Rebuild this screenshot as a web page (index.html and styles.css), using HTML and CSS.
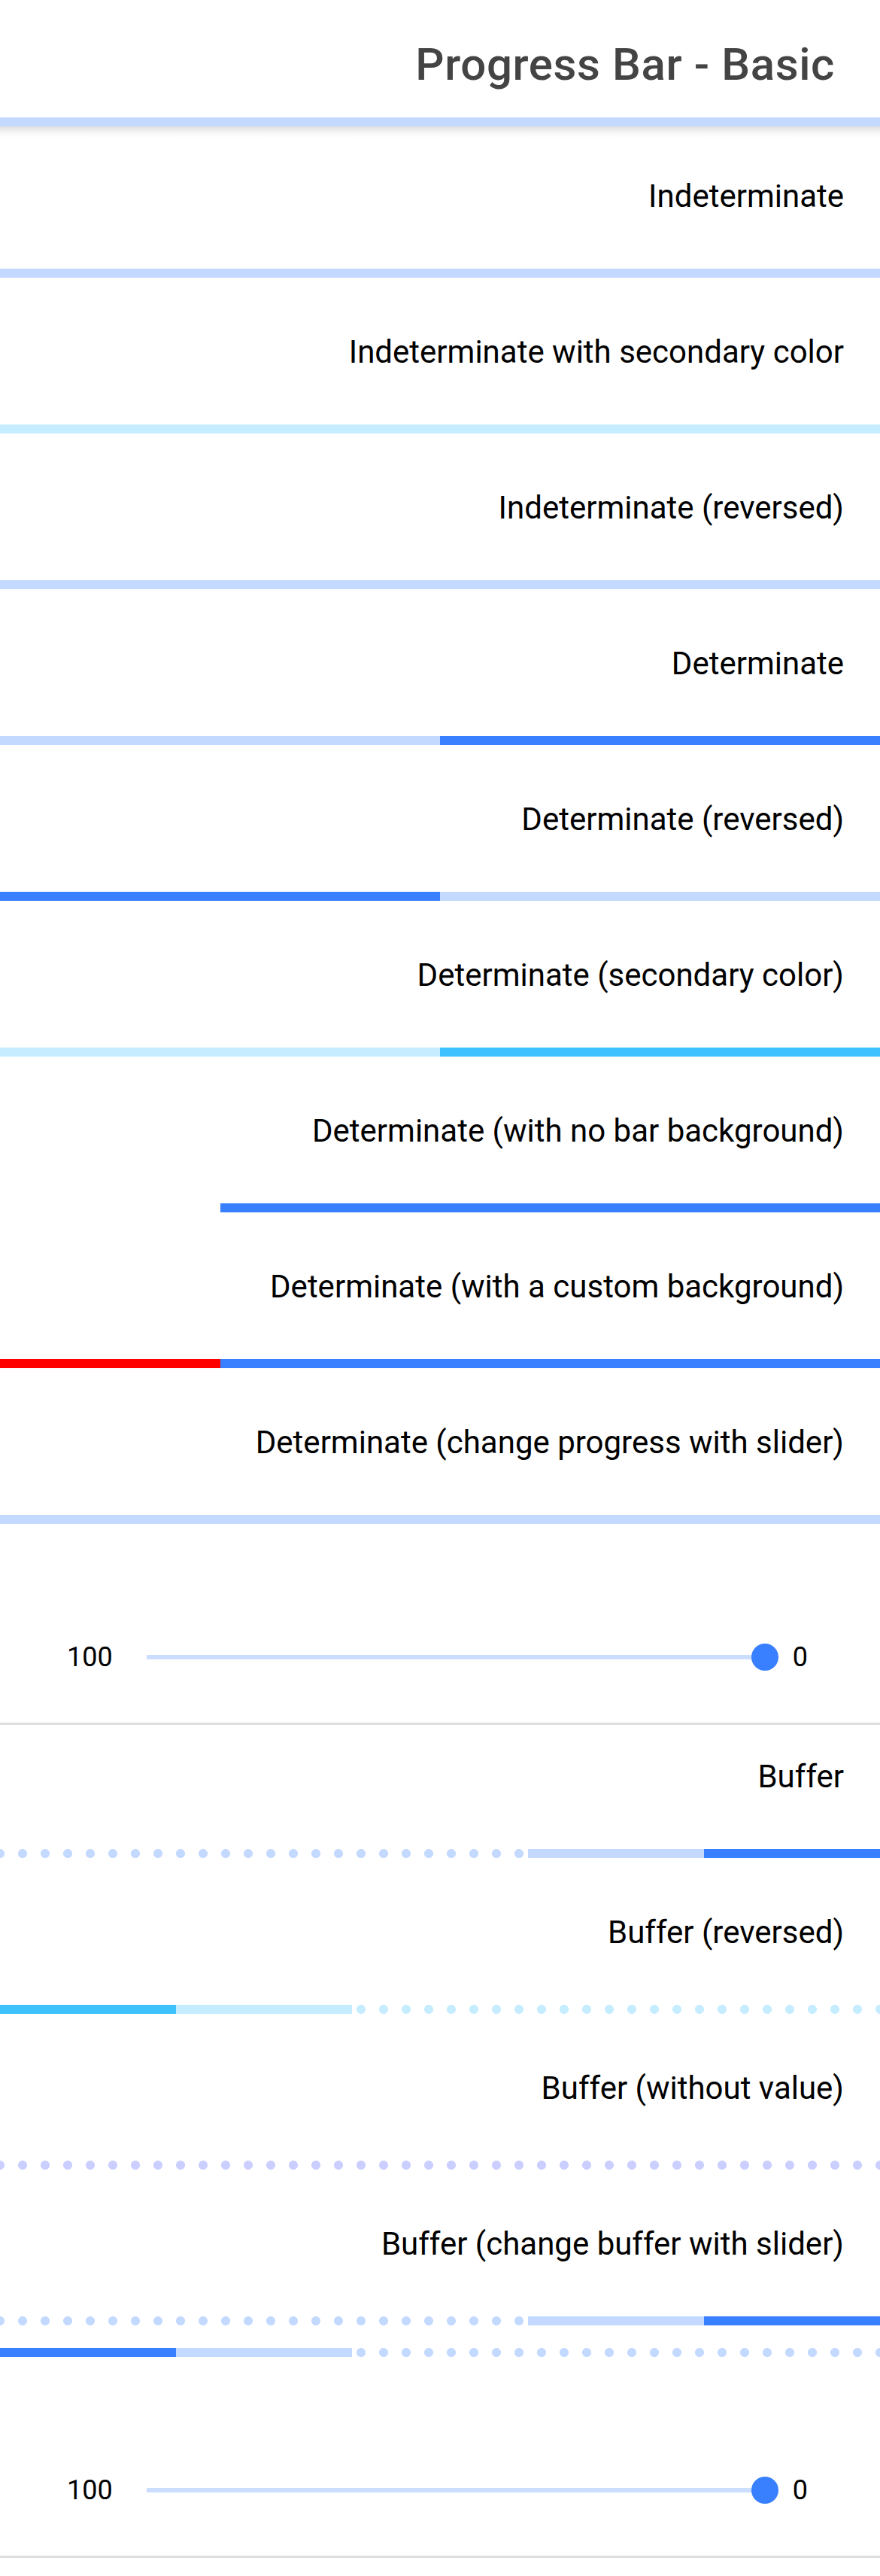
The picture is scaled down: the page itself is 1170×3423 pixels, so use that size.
FILE: index.html
```html
<!DOCTYPE html>
<html lang="en">
<head>
<meta charset="utf-8">
<title>Progress Bar - Basic</title>
<link rel="stylesheet" href="styles.css">
</head>
<body>
<header class="toolbar">
  <div class="title">Progress Bar - Basic</div>
  <div class="bar"></div>
</header>
<main class="content">
  <section class="demo first">
    <h2 class="label">Indeterminate</h2>
    <div class="bar"></div>
  </section>
  <section class="demo">
    <h2 class="label">Indeterminate with secondary color</h2>
    <div class="bar secondary"></div>
  </section>
  <section class="demo">
    <h2 class="label">Indeterminate (reversed)</h2>
    <div class="bar"></div>
  </section>
  <section class="demo">
    <h2 class="label">Determinate</h2>
    <div class="bar"><div class="fill" style="width:50%"></div></div>
  </section>
  <section class="demo">
    <h2 class="label">Determinate (reversed)</h2>
    <div class="bar rev"><div class="fill" style="width:50%"></div></div>
  </section>
  <section class="demo">
    <h2 class="label">Determinate (secondary color)</h2>
    <div class="bar secondary"><div class="fill" style="width:50%"></div></div>
  </section>
  <section class="demo">
    <h2 class="label">Determinate (with no bar background)</h2>
    <div class="bar nobg"><div class="fill" style="width:75%"></div></div>
  </section>
  <section class="demo">
    <h2 class="label">Determinate (with a custom background)</h2>
    <div class="bar custom"><div class="fill" style="width:75%"></div></div>
  </section>
  <section class="demo">
    <h2 class="label">Determinate (change progress with slider)</h2>
    <div class="bar"><div class="fill" style="width:0%"></div></div>
    <div class="range">
      <span class="range-label">100</span>
      <div class="range-track"><span class="knob"></span></div>
      <span class="range-label end">0</span>
    </div>
    <div class="divider"></div>
  </section>
  <section class="demo after-divider">
    <h2 class="label">Buffer</h2>
    <div class="bar buffer"><div class="buf" style="width:40%"><div class="fill" style="width:50%"></div></div></div>
  </section>
  <section class="demo">
    <h2 class="label">Buffer (reversed)</h2>
    <div class="bar buffer secondary rev"><div class="buf" style="width:40%"><div class="fill" style="width:50%"></div></div></div>
  </section>
  <section class="demo">
    <h2 class="label">Buffer (without value)</h2>
    <div class="bar buffer tertiary"></div>
  </section>
  <section class="demo">
    <h2 class="label">Buffer (change buffer with slider)</h2>
    <div class="bar buffer"><div class="buf" style="width:40%"><div class="fill" style="width:50%"></div></div></div>
    <div class="bar buffer rev second"><div class="buf" style="width:40%"><div class="fill" style="width:50%"></div></div></div>
    <div class="range">
      <span class="range-label">100</span>
      <div class="range-track"><span class="knob"></span></div>
      <span class="range-label end">0</span>
    </div>
    <div class="divider"></div>
  </section>
</main>
</body>
</html>
```
FILE: styles.css
```css
html, body {
  margin: 0;
  padding: 0;
  background: #ffffff;
}

body {
  font-family: Roboto, "Liberation Sans", sans-serif;
  color: #000;
}

.toolbar {
  position: relative;
  background: #ffffff;
}

.toolbar::after {
  content: "";
  position: absolute;
  left: 0;
  right: 0;
  top: 100%;
  height: 15px;
  background: linear-gradient(rgba(0, 0, 0, 0.12), rgba(0, 0, 0, 0.03) 60%, rgba(0, 0, 0, 0));
}

.title {
  box-sizing: border-box;
  height: 156px;
  padding: 15px 60px 0 0;
  display: flex;
  align-items: center;
  justify-content: flex-end;
  font-size: 60px;
  font-weight: 500;
  letter-spacing: 0.6px;
  color: #444444;
}

.label {
  margin: 68px 48px 66px 0;
  font-size: 42px;
  font-weight: 400;
  line-height: 61px;
  text-align: right;
  color: #000;
}

.first .label {
  margin-top: 62px;
}

.after-divider .label {
  margin-top: 38px;
}

/* progress bars */
.bar {
  height: 12px;
  display: flex;
  justify-content: flex-end;
  background: #c3d9ff;
  overflow: hidden;
}

.bar.rev {
  justify-content: flex-start;
}

.fill {
  height: 12px;
  background: #3880ff;
}

.bar.secondary {
  background: #c5edff;
}

.bar.secondary .fill {
  background: #3dc2ff;
}

.bar.nobg {
  background: transparent;
}

.bar.custom {
  background: #ff0000;
}

.bar.buffer {
  background-color: transparent;
  background-image: radial-gradient(circle, #c3d9ff 5.6px, rgba(195, 217, 255, 0) 6.4px);
  background-size: 30px 12px;
  background-position: -15px 0;
  background-repeat: repeat-x;
}

.bar.buffer.secondary {
  background-image: radial-gradient(circle, #c5edff 5.6px, rgba(197, 237, 255, 0) 6.4px);
}

.bar.buffer.tertiary {
  background-image: radial-gradient(circle, #cbcfff 5.6px, rgba(203, 207, 255, 0) 6.4px);
}

.buf {
  height: 12px;
  display: flex;
  justify-content: flex-end;
  background: #c3d9ff;
}

.bar.rev .buf {
  justify-content: flex-start;
}

.bar.secondary .buf {
  background: #c5edff;
}

.bar.second {
  margin-top: 30px;
}

/* range slider */
.range {
  display: flex;
  align-items: center;
  height: 84px;
  margin-top: 135px;
  padding: 0 96px 0 89px;
}

.range-label {
  font-size: 36px;
  line-height: 42px;
  color: #000;
}

.range-track {
  position: relative;
  flex: 1;
  height: 6px;
  margin-left: 45px;
  background: #cbdeff;
}

.range-label.end {
  margin-left: 37px;
}

.knob {
  position: absolute;
  right: -18px;
  top: -15px;
  width: 36px;
  height: 36px;
  border-radius: 50%;
  background: #3880ff;
}

.divider {
  height: 3px;
  margin-top: 45px;
  background: #dedede;
}
```
